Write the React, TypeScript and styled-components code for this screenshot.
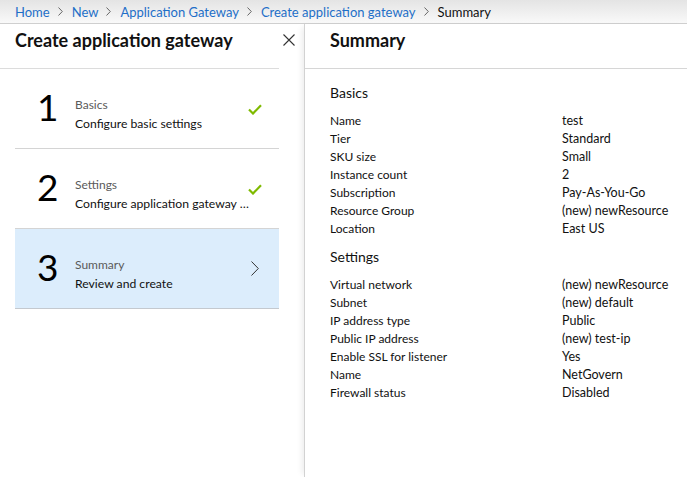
import * as React from "react";
import styled, { createGlobalStyle } from "styled-components";

interface IStep {
  num: number;
  title: string;
  subtitle: string;
  done?: boolean;
  active?: boolean;
}

const steps: IStep[] = [
  { num: 1, title: "Basics", subtitle: "Configure basic settings", done: true },
  { num: 2, title: "Settings", subtitle: "Configure application gateway settings", done: true },
  { num: 3, title: "Summary", subtitle: "Review and create", active: true },
];

const sections: { title: string; rows: [string, string][] }[] = [
  {
    title: "Basics",
    rows: [
      ["Name", "test"],
      ["Tier", "Standard"],
      ["SKU size", "Small"],
      ["Instance count", "2"],
      ["Subscription", "Pay-As-You-Go"],
      ["Resource Group", "(new) newResource"],
      ["Location", "East US"],
    ],
  },
  {
    title: "Settings",
    rows: [
      ["Virtual network", "(new) newResource"],
      ["Subnet", "(new) default"],
      ["IP address type", "Public"],
      ["Public IP address", "(new) test-ip"],
      ["Enable SSL for listener", "Yes"],
      ["Name", "NetGovern"],
      ["Firewall status", "Disabled"],
    ],
  },
];

const crumbs = ["Home", "New", "Application Gateway", "Create application gateway"];

const Chevron = ({ w = 5, h = 9, color = "#666" }: { w?: number; h?: number; color?: string }) => (
  <svg width={w} height={h} viewBox={`0 0 ${w} ${h}`}>
    <polyline points={`0.5,0.5 ${w - 0.7},${h / 2} 0.5,${h - 0.5}`} fill="none" stroke={color} strokeWidth="1" />
  </svg>
);

const Check = () => (
  <svg width="14" height="11" viewBox="0 0 14 11">
    <polyline points="1,5.5 5,9.5 13,1.2" fill="none" stroke="#7fba00" strokeWidth="2.2" />
  </svg>
);

const CloseIcon = () => (
  <svg width="12" height="12" viewBox="0 0 12 12">
    <path d="M0.5 0.5 L11.5 11.5 M11.5 0.5 L0.5 11.5" stroke="#333" strokeWidth="1.1" />
  </svg>
);

const App = () => {
  return (
    <Page>
      <GlobalStyle />
      <Breadcrumb>
        {crumbs.map((c) => (
          <React.Fragment key={c}>
            <Crumb>{c}</Crumb>
            <Sep>
              <Chevron />
            </Sep>
          </React.Fragment>
        ))}
        <CurrentCrumb>Summary</CurrentCrumb>
      </Breadcrumb>
      <Main>
        <LeftBlade>
          <BladeHeader>
            <BladeTitle>Create application gateway</BladeTitle>
            <CloseButton>
              <CloseIcon />
            </CloseButton>
          </BladeHeader>
          <StepList>
            {steps.map((s) => (
              <StepItem key={s.num} active={s.active}>
                <StepNum>{s.num}</StepNum>
                <StepText>
                  <StepTitle>{s.title}</StepTitle>
                  <StepSub>{s.subtitle}</StepSub>
                </StepText>
                <StepIcon active={s.active}>
                  {s.done ? <Check /> : <Chevron w={8} h={15} color="#333" />}
                </StepIcon>
              </StepItem>
            ))}
          </StepList>
        </LeftBlade>
        <RightBlade>
          <RightHeader>
            <BladeTitle>Summary</BladeTitle>
          </RightHeader>
          <Content>
            {sections.map((sec) => (
              <Section key={sec.title}>
                <SectionTitle>{sec.title}</SectionTitle>
                <Rows>
                  {sec.rows.map(([k, v], i) => (
                    <Row key={i}>
                      <Label>{k}</Label>
                      <Value>{v}</Value>
                    </Row>
                  ))}
                </Rows>
              </Section>
            ))}
          </Content>
        </RightBlade>
      </Main>
    </Page>
  );
};

const GlobalStyle = createGlobalStyle`
  html, body {
    margin: 0;
    padding: 0;
    background: #fff;
    font-family: Lato, "Open Sans", sans-serif;
    color: #000;
  }
`;

const Page = styled.div`
  width: 687px;
  height: 477px;
  display: flex;
  flex-direction: column;
  overflow: hidden;
`;

const Breadcrumb = styled.div`
  height: 23px;
  flex-shrink: 0;
  display: flex;
  align-items: center;
  padding-left: 15px;
  font-size: 13px;
  background: linear-gradient(#e4e4e4, #f9f9f9);
  border-bottom: 1px solid #cfcfcf;
  white-space: nowrap;
`;

const Crumb = styled.span`
  color: #1e6fc8;
`;

const CurrentCrumb = styled.span`
  color: #111;
`;

const Sep = styled.span`
  display: flex;
  align-items: center;
  margin: 0 9px 0 8px;
`;

const Main = styled.div`
  flex: 1;
  display: flex;
  min-height: 0;
`;

const LeftBlade = styled.div`
  width: 304px;
  flex-shrink: 0;
  display: flex;
  flex-direction: column;
`;

const BladeHeader = styled.div`
  height: 32px;
  padding: 0 0 12px 15px;
  margin-right: 25px;
  display: flex;
  align-items: center;
  justify-content: space-between;
  border-bottom: 1px solid #dcdcdc;
`;

const BladeTitle = styled.h1`
  margin: 0;
  font-size: 18px;
  font-weight: 700;
  color: #111;
`;

const CloseButton = styled.div`
  width: 12px;
  height: 12px;
  display: flex;
  margin-right: -16px;
`;

const StepList = styled.div`
  display: flex;
  flex-direction: column;
  margin: 0 25px 0 15px;
`;

const StepItem = styled.div<{ active?: boolean }>`
  height: 79px;
  display: flex;
  align-items: center;
  border-bottom: 1px solid ${(p) => (p.active ? "#c4c9cf" : "#d4d4d4")};
  background: ${(p) => (p.active ? "#dcedfc" : "transparent")};
  position: relative;
`;

const StepNum = styled.div`
  width: 60px;
  padding-left: 22px;
  box-sizing: border-box;
  font-size: 37px;
  line-height: 1;
  color: #000;
  margin-top: -4px;
`;

const StepText = styled.div`
  display: flex;
  flex-direction: column;
  gap: 4px;
  min-width: 0;
  width: 176px;
  margin-top: 11px;
`;

const StepTitle = styled.div`
  font-size: 12px;
  color: #5a5a5a;
`;

const StepSub = styled.div`
  font-size: 12.2px;
  color: #111;
  white-space: nowrap;
  overflow: hidden;
  text-overflow: ellipsis;
`;

const StepIcon = styled.div<{ active?: boolean }>`
  position: absolute;
  right: ${(p) => (p.active ? "20px" : "17px")};
  top: ${(p) => (p.active ? "32px" : "35px")};
  display: flex;
`;

const RightBlade = styled.div`
  flex: 1;
  display: flex;
  flex-direction: column;
  border-left: 1px solid #d2d2d2;
  box-shadow: -5px 0 6px -3px rgba(0, 0, 0, 0.08);
  position: relative;
  z-index: 1;
  background: #fff;
  min-width: 0;
`;

const RightHeader = styled.div`
  height: 32px;
  padding: 0 0 12px 25px;
  display: flex;
  align-items: center;
  border-bottom: 1px solid #d6d6d6;
`;

const Content = styled.div`
  padding: 15px 0 0 25px;
  display: flex;
  flex-direction: column;
  gap: 10px;
`;

const Section = styled.div`
  display: flex;
  flex-direction: column;
  gap: 10px;
`;

const SectionTitle = styled.div`
  font-size: 14px;
  line-height: 18px;
  color: #111;
`;

const Rows = styled.div`
  display: flex;
  flex-direction: column;
`;

const Row = styled.div`
  display: grid;
  grid-template-columns: 232px 1fr;
  font-size: 12px;
  line-height: 18px;
  white-space: nowrap;
`;

const Label = styled.span`
  color: #111;
`;

const Value = styled.span`
  color: #111;
  font-size: 12.5px;
`;

export default App;
